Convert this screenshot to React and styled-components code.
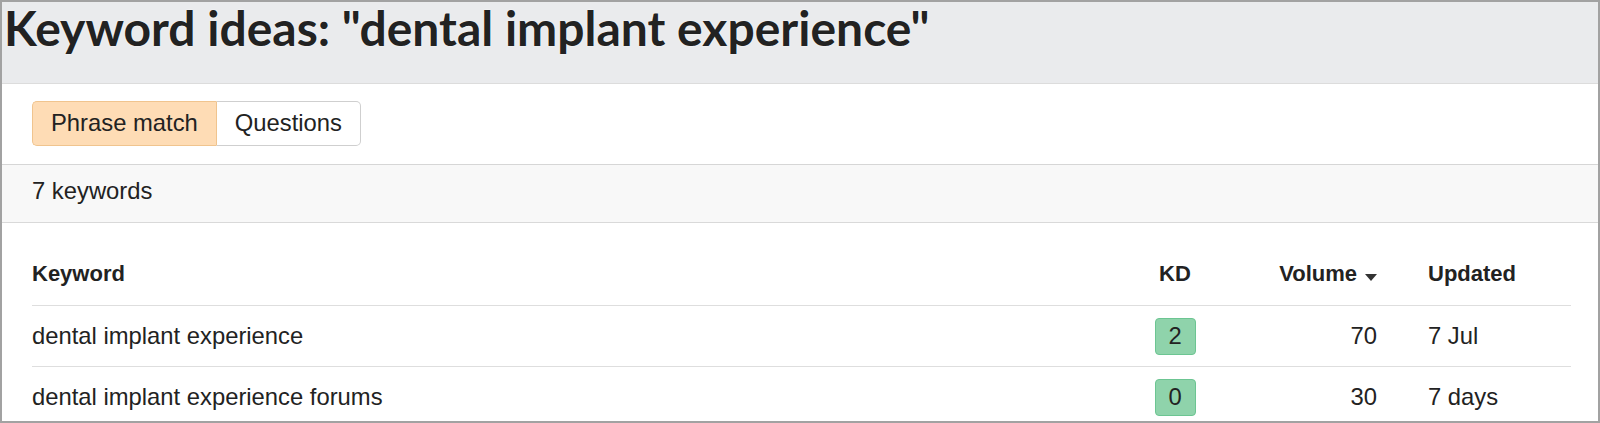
import React from "react";
import styled, { createGlobalStyle } from "styled-components";

const GlobalStyle = createGlobalStyle`
  html, body {
    margin: 0;
    padding: 0;
    background: #fff;
  }
  * {
    box-sizing: border-box;
  }
`;

const filas = [
  { keyword: "dental implant experience", kd: 2, volume: 70, updated: "7 Jul" },
  { keyword: "dental implant experience forums", kd: 0, volume: 30, updated: "7 days" },
];

const App = () => {
  return (
    <Frame>
      <GlobalStyle />
      <Header>
        <Titulo>Keyword ideas: "dental implant experience"</Titulo>
      </Header>
      <Toolbar>
        <Grupo>
          <Tab active>Phrase match</Tab>
          <Tab>Questions</Tab>
        </Grupo>
      </Toolbar>
      <Contador>7 keywords</Contador>
      <Tabla>
        <Fila head>
          <Celda head>Keyword</Celda>
          <Celda head align="center">KD</Celda>
          <Celda head align="right">
            Volume <Flecha />
          </Celda>
          <Celda head pad>Updated</Celda>
        </Fila>
        {filas.map((v, i) => (
          <Fila key={i}>
            <Celda>{v.keyword}</Celda>
            <Celda align="center">
              <Badge>{v.kd}</Badge>
            </Celda>
            <Celda align="right">{v.volume}</Celda>
            <Celda pad>{v.updated}</Celda>
          </Fila>
        ))}
      </Tabla>
    </Frame>
  );
};

export default App;

const Frame = styled.div`
  width: 1600px;
  height: 423px;
  border: 2px solid #a2a2a2;
  overflow: hidden;
  display: flex;
  flex-direction: column;
  font-family: "Liberation Sans", Arial, sans-serif;
  color: #222;
  background: #fff;
`;
const Header = styled.div`
  height: 82px;
  flex-shrink: 0;
  background: #eaebed;
  border-bottom: 1px solid #dcdcdc;
  padding: 1px 0 0 2px;
`;
const Titulo = styled.h1`
  margin: 0;
  font-family: Lato, "Liberation Sans", sans-serif;
  font-weight: 700;
  font-size: 48px;
  line-height: 50px;
  color: #222;
  text-shadow: 0 0 2px rgba(255, 255, 255, 0.9);
  white-space: nowrap;
`;
const Toolbar = styled.div`
  height: 81px;
  flex-shrink: 0;
  padding: 17px 30px 0;
  border-bottom: 1px solid #d6d6d6;
`;
const Grupo = styled.div`
  display: flex;
`;
const Tab = styled.button`
  height: 45px;
  padding: 0 18px 2px;
  font-family: "Liberation Sans", Arial, sans-serif;
  font-size: 23.8px;
  color: #222;
  cursor: pointer;
  background: ${(p) => (p.active ? "#fedcb5" : "#fff")};
  border: 1px solid ${(p) => (p.active ? "#f0c48e" : "#cfcfcf")};
  &:first-child {
    border-radius: 5px 0 0 5px;
    border-right: none;
  }
  &:last-child {
    border-radius: 0 5px 5px 0;
    border-left: 1px solid #f0c48e;
  }
`;
const Contador = styled.div`
  height: 58px;
  flex-shrink: 0;
  display: flex;
  align-items: center;
  padding: 0 30px 5px;
  background: #f8f8f8;
  border-bottom: 1px solid #d9d9d9;
  font-size: 23.8px;
`;
const Tabla = styled.div`
  padding: 0 27px 0 30px;
  display: flex;
  flex-direction: column;
`;
const Fila = styled.div`
  display: grid;
  grid-template-columns: 1fr 110px 170px 171px;
  height: ${(p) => (p.head ? "83px" : "61px")};
  border-bottom: 1px solid #dedede;
  align-items: ${(p) => (p.head ? "end" : "center")};
  flex-shrink: 0;
`;
const Celda = styled.div`
  font-size: ${(p) => (p.head ? "22px" : "23.8px")};
  font-weight: ${(p) => (p.head ? 700 : 400)};
  line-height: 26px;
  padding-bottom: ${(p) => (p.head ? "18px" : "0")};
  padding-right: ${(p) => (p.align === "right" ? "23px" : "0")};
  padding-left: ${(p) => (p.pad ? "28px" : "0")};
  white-space: nowrap;
  display: flex;
  align-items: center;
  justify-content: ${(p) =>
    p.align === "center" ? "center" : p.align === "right" ? "flex-end" : "flex-start"};
`;
const Flecha = styled.span`
  display: inline-block;
  margin-left: 8px;
  margin-top: 6px;
  width: 0;
  height: 0;
  border-left: 6px solid transparent;
  border-right: 6px solid transparent;
  border-top: 7px solid #333;
`;
const Badge = styled.span`
  width: 41px;
  height: 37px;
  display: flex;
  align-items: center;
  justify-content: center;
  background: #8fd3ab;
  border: 1px solid #6cc592;
  border-radius: 4px;
  font-size: 23.8px;
  color: #222;
`;
